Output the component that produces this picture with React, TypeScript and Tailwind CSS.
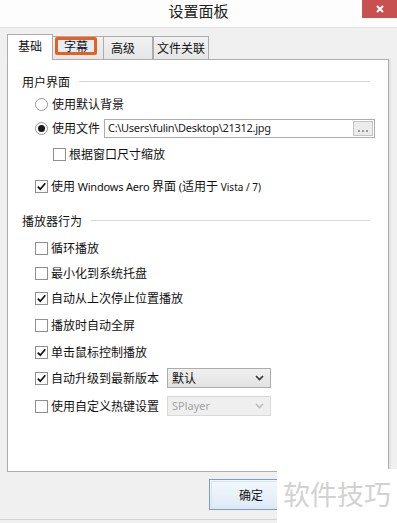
import React from "react";

const Check = ({ checked }: { checked?: boolean }) => (
  <div className="w-[13px] h-[13px] border border-[#8f8f8f] bg-white flex items-center justify-center shrink-0">
    {checked && (
      <svg width="11" height="11" viewBox="0 0 11 11">
        <path d="M1.8 5.6 L4.3 8.2 L9.3 2.2" fill="none" stroke="#111" strokeWidth="1.7" />
      </svg>
    )}
  </div>
);

const Radio = ({ checked }: { checked?: boolean }) => (
  <div className="w-[13px] h-[13px] rounded-full border border-[#9a9a9a] bg-white flex items-center justify-center shrink-0">
    {checked && <div className="w-[7px] h-[7px] rounded-full bg-[#1a1a1a]" />}
  </div>
);

const Chevron = ({ color }: { color: string }) => (
  <svg width="9" height="6" viewBox="0 0 9 6">
    <path d="M1 1 L4.5 4.5 L8 1" fill="none" stroke={color} strokeWidth="1.6" />
  </svg>
);

const GroupLabel = ({ text, mt }: { text: string; mt: string }) => (
  <div className={`flex items-center h-[20px] pl-[14px] pr-[18px] gap-[9px] ${mt}`}>
    <span className="text-[12px] leading-[16px] text-[#111]">{text}</span>
    <div className="flex-1 flex flex-col">
      <div className="h-px bg-[#d5d5d5]" />
      <div className="h-px bg-white" />
    </div>
  </div>
);

const CheckRow = ({ text, checked, mt, children }: { text: string; checked?: boolean; mt: string; children?: React.ReactNode }) => (
  <div className={`flex items-center h-[20px] pl-[27px] ${mt}`}>
    <Check checked={checked} />
    <span className="ml-[3px] text-[12px] leading-[16px] text-[#111] w-[116px] whitespace-nowrap">{text}</span>
    {children}
  </div>
);

export default function App() {
  return (
    <div className="w-[397px] h-[523px] bg-[#f0f0f0] relative overflow-hidden flex flex-col font-['Noto_Sans_CJK_SC',sans-serif] text-[#111]">
      {/* Title bar */}
      <div className="h-[28px] bg-[#fdfdfd] border-b border-[#e2e2e2] flex items-center justify-center relative shrink-0">
        <span className="text-[15px] leading-[18px] text-[#222] -mt-[5px]">设置面板</span>
        <div className="absolute right-0 top-0 w-[35px] h-[18px] bg-[#c75050] flex items-center justify-center">
          <svg width="8" height="8" viewBox="0 0 8 8">
            <path d="M1 1 L7 7 M7 1 L1 7" stroke="#fff" strokeWidth="2" />
          </svg>
        </div>
      </div>

      {/* Tabs */}
      <div className="flex items-end h-[26px] mt-[6px] pl-[7px] relative z-10 shrink-0">
        <div className="w-[46px] h-[26px] bg-white border border-b-0 border-[#acacac] flex items-center justify-center">
          <span className="text-[12px] leading-[16px] -mt-[3px]">基础</span>
        </div>
        <div className="w-[51px] h-[23px] mb-[1px] border border-l-0 border-b-0 border-[#acacac] bg-gradient-to-b from-[#f2f2f2] to-[#e6e6e6] flex items-start pl-[2px]">
          <div className="w-[42px] h-[18px] border-[3px] border-[#e8601c] rounded-[2px] bg-[#e3eef9] flex items-center justify-center">
            <span className="text-[12px] leading-[14px]">字幕</span>
          </div>
        </div>
        <div className="w-[49px] h-[23px] mb-[1px] border border-l-0 border-b-0 border-[#acacac] bg-gradient-to-b from-[#f2f2f2] to-[#e6e6e6] flex items-center pl-[7px]">
          <span className="text-[12px] leading-[16px]">高级</span>
        </div>
        <div className="w-[56px] h-[23px] mb-[1px] border border-b-0 border-[#acacac] bg-gradient-to-b from-[#f2f2f2] to-[#e6e6e6] flex items-center justify-center">
          <span className="text-[12px] leading-[16px]">文件关联</span>
        </div>
      </div>

      {/* Panel */}
      <div className="ml-[7px] w-[382px] h-[413px] -mt-[1px] bg-white border border-[#adadad] shadow-[2px_0_0_#e4e4e4] flex flex-col shrink-0">
        <GroupLabel text="用户界面" mt="mt-[12px]" />

        <div className="flex items-center h-[20px] pl-[27px] mt-[2px]">
          <Radio />
          <span className="ml-[4px] text-[12px] leading-[16px]">使用默认背景</span>
        </div>

        <div className="flex items-center h-[20px] pl-[27px] mt-[4px]">
          <Radio checked />
          <span className="ml-[4px] text-[12px] leading-[16px] w-[52px]">使用文件</span>
          <div className="w-[271px] h-[19px] border border-[#abadb3] bg-white flex items-center pl-[3px] pr-[1px]">
            <span className="flex-1 text-[11px] leading-[14px] font-['Noto_Sans',sans-serif] tracking-[-0.3px] text-[#222]">C:\Users\fulin\Desktop\21312.jpg</span>
            <div className="w-[20px] h-[15px] border border-[#c4c4c4] bg-[#ececec] flex flex-col items-center justify-end pb-[2px]">
              <svg width="12" height="4" viewBox="0 0 12 4">
                <rect x="1" y="1" width="2" height="2" fill="#9a9a9a" />
                <rect x="5" y="1" width="2" height="2" fill="#9a9a9a" />
                <rect x="9" y="1" width="2" height="2" fill="#9a9a9a" />
              </svg>
            </div>
          </div>
        </div>

        <div className="flex items-center h-[20px] pl-[45px] mt-[6px]">
          <Check />
          <span className="ml-[3px] text-[12px] leading-[16px]">根据窗口尺寸缩放</span>
        </div>

        <div className="flex items-center h-[20px] pl-[27px] mt-[12px]">
          <Check checked />
          <span className="ml-[3px] text-[12px] leading-[16px] whitespace-nowrap">
            使用 <span className="font-['Noto_Sans',sans-serif] text-[11px] tracking-[-0.2px]">Windows Aero</span> 界面 <span className="font-['Noto_Sans',sans-serif] text-[11px]">(</span>适用于 <span className="font-['Noto_Sans',sans-serif] text-[10px]">Vista / 7)</span>
          </span>
        </div>

        <GroupLabel text="播放器行为" mt="mt-[15px]" />

        <CheckRow text="循环播放" mt="mt-[7px]" />
        <CheckRow text="最小化到系统托盘" mt="mt-[5px]" />
        <CheckRow text="自动从上次停止位置播放" checked mt="mt-[5px]" />
        <CheckRow text="播放时自动全屏" mt="mt-[7px]" />
        <CheckRow text="单击鼠标控制播放" checked mt="mt-[7px]" />
        <CheckRow text="自动升级到最新版本" checked mt="mt-[6px]">
          <div className="w-[104px] h-[20px] border border-[#acacac] bg-gradient-to-b from-[#f0f0f0] to-[#e3e3e3] flex items-center pl-[4px] pr-[6px]">
            <span className="flex-1 text-[12px] leading-[16px]">默认</span>
            <Chevron color="#333" />
          </div>
        </CheckRow>
        <CheckRow text="使用自定义热键设置" mt="mt-[8px]">
          <div className="w-[104px] h-[20px] border border-[#d9d9d9] bg-[#efefef] flex items-center pl-[4px] pr-[6px]">
            <span className="flex-1 text-[11px] leading-[14px] font-['Noto_Sans',sans-serif] text-[#a3a3a3]">SPlayer</span>
            <Chevron color="#bdbdbd" />
          </div>
        </CheckRow>
      </div>

      {/* Bottom buttons */}
      <div className="flex pl-[209px] mt-[7px] shrink-0">
        <div className="w-[84px] h-[31px] border border-[#7a9ec4] bg-gradient-to-b from-[#f3f8fd] to-[#dfeaf6] flex items-center justify-center p-[1px]">
          <div className="w-full h-full border border-[#d8e6f4] flex items-center justify-center">
            <span className="text-[12px] leading-[16px]">确定</span>
          </div>
        </div>
      </div>
      <div className="mt-[9px] h-px bg-[#d4d4d4] shrink-0" />

      {/* Watermark overlay */}
      <div className="absolute right-0 bottom-0 w-[120px] h-[54px] bg-white flex items-center pl-[6px]">
        <span className="text-[27px] leading-[30px] text-[#d2d2d2] -mt-[4px]">软件技巧</span>
      </div>
    </div>
  );
}
